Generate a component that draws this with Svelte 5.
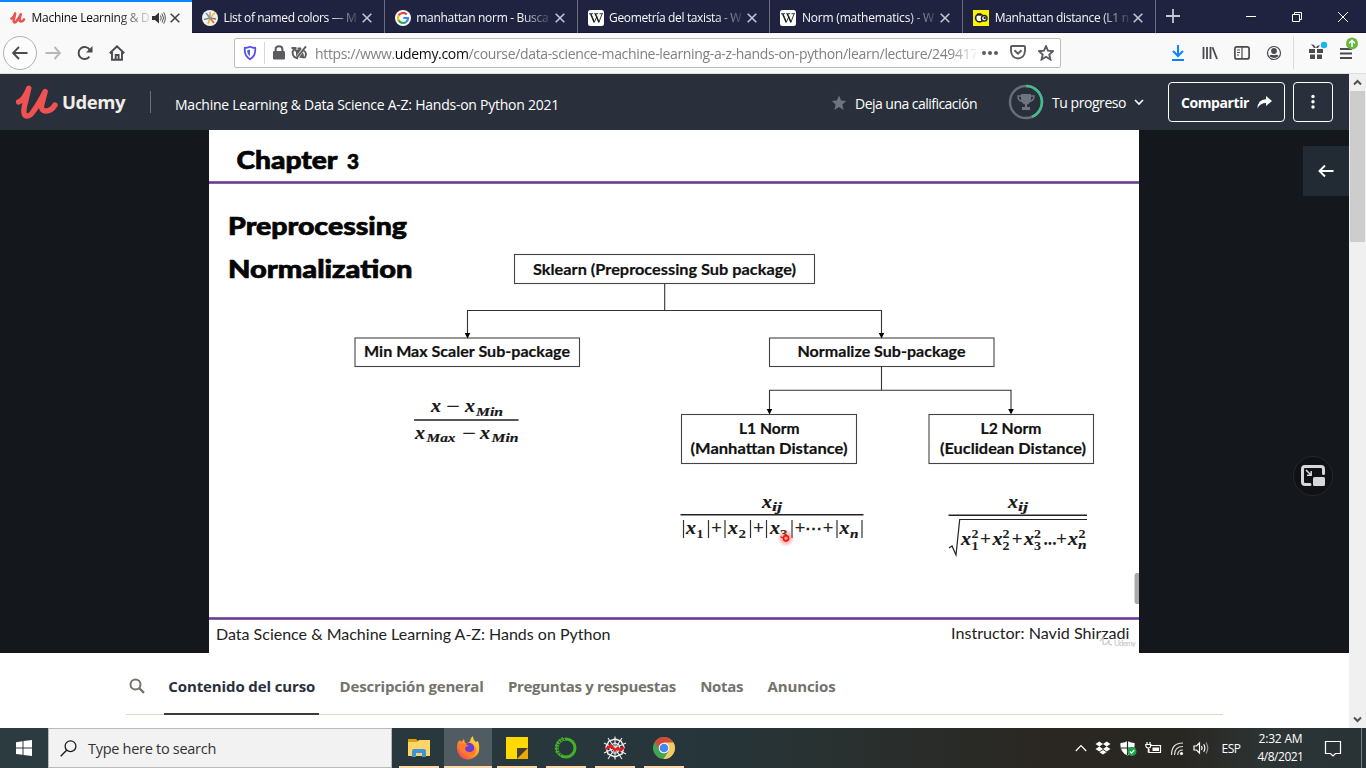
<script>
  const tabs = [
    { title: 'Machine Learning & D', width: 118, icon: 'udemy', active: true },
    { title: 'List of named colors — M', width: 133, icon: 'colors' },
    { title: 'manhattan norm - Busca', width: 132, icon: 'google' },
    { title: 'Geometría del taxista - W', width: 132, icon: 'wiki' },
    { title: 'Norm (mathematics) - W', width: 132, icon: 'wiki' },
    { title: 'Manhattan distance (L1 n', width: 134, icon: 'manhattan' }
  ];

  const sections = [
    { label: 'Contenido del curso', width: 147, active: true },
    { label: 'Descripción general', width: 144 },
    { label: 'Preguntas y respuestas', width: 168 },
    { label: 'Notas', width: 43 },
    { label: 'Anuncios', width: 68 }
  ];

  const boxes = [
    { x: 514.5, y: 254.5, w: 300, h: 29 },
    { x: 355, y: 338, w: 224.5, h: 28.5 },
    { x: 769.5, y: 338, w: 224.5, h: 28.5 },
    { x: 681.5, y: 414.5, w: 175, h: 49 },
    { x: 929, y: 414.5, w: 164.5, h: 49 }
  ];

  const labels = [
    { t: 'Sklearn (Preprocessing Sub package)', x: 533, y: 275, w: 263 },
    { t: 'Min Max Scaler Sub-package', x: 364, y: 357.3, w: 206 },
    { t: 'Normalize Sub-package', x: 797.5, y: 357.3, w: 168 },
    { t: 'L1 Norm', x: 739, y: 434, w: 60.5 },
    { t: '(Manhattan Distance)', x: 690.5, y: 454.2, w: 157 },
    { t: 'L2 Norm', x: 980.5, y: 434, w: 61 },
    { t: '(Euclidean Distance)', x: 940, y: 454.2, w: 146 }
  ];

  // Formula glyph runs: text, x, baseline, width, size class
  const formulas = [
    ['x', 431, 412, 10, 'v'], ['−', 446, 412, 14, 'o'], ['x', 465, 412, 10, 'v'], ['Min', 476, 415.5, 27, 's'],
    ['x', 415, 438.5, 10, 'v'], ['Max', 426.5, 442, 29, 's'], ['−', 462, 438.5, 14, 'o'], ['x', 480, 438.5, 10, 'v'], ['Min', 491.5, 442, 27, 's'],
    ['x', 762, 508, 10, 'v'], ['ij', 772, 511, 10, 's'],
    ['x', 686, 533.5, 10, 'v'], ['1', 696.5, 537.5, 7, 'n'], ['+', 711, 533.5, 11, 'o'],
    ['x', 728, 533.5, 10, 'v'], ['2', 738.5, 537.5, 7.5, 'n'], ['+', 753, 533.5, 11, 'o'],
    ['x', 770, 533.5, 10, 'v'], ['3', 780, 537.5, 7.5, 'n'], ['+', 794.5, 533.5, 11, 'o'],
    ['⋯', 805, 533.5, 17, 'o'], ['+', 822.5, 533.5, 11, 'o'], ['x', 839.5, 533.5, 10, 'v'], ['n', 850, 537.5, 8.5, 's'],
    ['x', 1008, 508, 10, 'v'], ['ij', 1018, 511, 10, 's'],
    ['x', 961, 545, 10, 'v'], ['2', 971.5, 538, 7, 'n'], ['1', 971.5, 549.5, 7, 'n'], ['+', 980, 545, 11, 'o'],
    ['x', 992.5, 545, 10, 'v'], ['2', 1002.5, 538, 7, 'n'], ['2', 1002.5, 549.5, 7, 'n'], ['+', 1011.5, 545, 11, 'o'],
    ['x', 1024, 545, 10, 'v'], ['2', 1034, 538, 7, 'n'], ['3', 1034, 549.5, 7, 'n'], ['...', 1043.5, 545, 13, 'o'],
    ['+', 1056, 545, 11, 'o'], ['x', 1068, 545, 10, 'v'], ['2', 1078.5, 538, 7, 'n'], ['n', 1078, 549, 8.5, 's']
  ];
  const bars = [683.5, 708.5, 725, 750.5, 766.5, 792, 837, 862];
  const apps = ['explorer', 'firefox', 'notes', 'anaconda', 'spyder', 'chrome'];

  // Tracks the text so that it takes the given width
  function fit(node, width) {
    const natural = node.getBoundingClientRect().width;
    node.style.letterSpacing = `${(width - natural) / node.textContent.length}px`;
  }
</script>

{#snippet favicon(kind)}
  <svg width="16" height="16" viewBox="0 0 16 16">
    {#if kind === 'udemy'}
      <path d="M1.4 8.6C3.200 8 4.600 5.500 5.200 3.400L3.800 9.800C3 13.200 5.400 13 6.800 10.800C8.600 8.400 9.800 6.200 10.700 4.200L9.600 9.400C9.200 12.200 12 12.200 14 9.400" fill="none" stroke="#ea5252" stroke-width="2.500" stroke-linecap="round" stroke-linejoin="round" />
    {:else if kind === 'colors'}
      <circle cx="8" cy="8" r="8" fill="#f4f1e8" />
      <g stroke-width="1.7" fill="none">
        <path d="M8 8L4 3" stroke="#5e9ad0" /><path d="M8 8L13 2.5" stroke="#efbd48" /><path d="M8 8L14 9" stroke="#91785a" />
        <path d="M8 8L12 13" stroke="#e36e35" /><path d="M8 8L6 14" stroke="#e4bb39" /><path d="M8 8L2 9.5" stroke="#6e90a5" /><path d="M8 8L8 2" stroke="#c2ac88" />
      </g>
      <circle cx="8" cy="8" r="1.5" fill="#8593a4" />
    {:else if kind === 'google'}
      <circle cx="8" cy="8" r="8" fill="#fff" />
      <g fill="none" stroke-width="2.2">
        <path d="M3.6 5.6A5 5 0 0 1 11.7 4.6" stroke="#ea4335" /><path d="M3.6 5.5A5 5 0 0 0 3.6 10.4" stroke="#fbbc05" />
        <path d="M3.6 10.3A5 5 0 0 0 11.3 11.8" stroke="#34a853" /><path d="M11.2 11.8A5 5 0 0 0 13 8H8.2" stroke="#4285f4" />
      </g>
    {:else if kind === 'wiki'}
      <rect width="16" height="16" rx="2.5" fill="#fff" />
      <path d="M1 3.7H5M6.1 3.7H10M11.5 3.7H15M2.8 4L6.2 12.3L9 6.500M7.4 4L10.9 12.3L14 4" fill="none" stroke="#222" stroke-width=".9" />
      <path d="M2.8 4L6.2 12.3M7.4 4L10.9 12.3" stroke="#222" stroke-width="1.4" />
    {:else}
      <rect width="16" height="16" fill="#fff200" />
      <circle cx="6.5" cy="8" r="3.9" fill="#fff" stroke="#222" stroke-width="1.6" /><circle cx="11.2" cy="8.3" r="2.8" fill="#fff" stroke="#222" stroke-width="1.4" />
      <circle cx="11.700" cy="8" r="1.200" fill="#222" /><path d="M4 4.500L8 4.800" stroke="#222" stroke-width="2" />
    {/if}
  </svg>
{/snippet}

{#snippet app(kind)}
  <svg width="24" height="24" viewBox="0 0 24 24">
    {#if kind === 'explorer'}
      <path d="M1 3H9L11 5V8H1z" fill="#e1a100" /><path d="M1 6H10L12 4H23V20H1z" fill="#ffd567" />
      <path d="M5 21V15Q5 13 7 13H17Q19 13 19 15V21H15V17H9V21z" fill="#3d94d8" />
    {:else if kind === 'firefox'}
      <path d="M2 6L4 4L5 6L8 3L9 7Q13 7 14 5Q14 2 17 0Q17 4 20 6L22 5Q26 18 17 22Q10 26 4 20Q-1 14 2 6z" fill="url(#fox)" />
      <circle cx="13" cy="12" r="5.3" fill="#6e3bd1" /><path d="M3 8Q8 6 13 10Q10 10 9 12Q9 16 14 16Q18 16 19 10Q22 19 13 20Q3 19 3 8z" fill="#ff7a29" />
    {:else if kind === 'notes'}
      <path d="M1 1H23V12L12 23H1z" fill="#ffd900" /><path d="M12 12H23L12 23z" fill="#433f36" /><path d="M23 12V23H12z" fill="#eca900" />
    {:else if kind === 'anaconda'}
      <circle cx="12" cy="12" r="9" fill="none" stroke="#43b02a" stroke-width="3" /><path d="M11 3A9 9 0 0 0 7 19" stroke="#26363b" stroke-width="1.5" stroke-dasharray="1.2 1.6" fill="none" />
      <path d="M9 2A10.500 10.500 0 0 0 3.500 18" stroke="#43b02a" stroke-width="1.8" stroke-dasharray="2 1.2" fill="none" />
    {:else if kind === 'spyder'}
      <g fill="none" stroke="#eee" stroke-width="1.1"><path d="M12 .500V23.500M1 7L23 18M1 17L23 7M5 2L19 23M19 2L5 23" /><path d="M12 3L18 5L21 11L19 18L12 21L5 18L3 11L6 5z" stroke-width="1.5" /><path d="M12 7L16 9L17 13L14 17H10L7 13L8 9z" /></g>
      <path d="M3 13L8 9.500L12 14L15 12L17 14.500L21 11.500" stroke="#e51b23" stroke-width="2.500" fill="none" />
    {:else}
      <circle cx="12" cy="12" r="11" fill="#43a455" /><path d="M12 12L2.5 6.5A11 11 0 0 1 21.5 6.5H12z" fill="#d9483b" /><path d="M21.5 6.5A11 11 0 0 1 11.5 23L17 14.5L12 6.5z" fill="#f4cb62" />
      <path d="M2.5 6.5L8 15L12 12L10 7z" fill="#d9483b" opacity=".6" /><circle cx="12" cy="12" r="5.3" fill="#fff" /><circle cx="12" cy="12" r="4.3" fill="#4586f4" />
    {/if}
    <defs><linearGradient id="fox" x1="1" y1="0" x2="0" y2="1"><stop offset="0" stop-color="#ffef48" /><stop offset=".5" stop-color="#ff9a26" /><stop offset="1" stop-color="#f22b68" /></linearGradient></defs>
  </svg>
{/snippet}

<div class="screen">
  <div class="tabbar">
    {#each tabs as tab}
      <div class="tab" class:active={tab.active}>
        {@render favicon(tab.icon)}
        <div class="title"><span use:fit={tab.width}>{tab.title}</span></div>
        {#if tab.active}
          <svg class="sound" width="16" height="14" viewBox="0 0 16 14"><path d="M1 5H4L8 1.5V12.5L4 9H1z" fill="#333" /><path d="M9.5 4.5Q11 7 9.5 9.5M11 2.5Q14 7 11 11.5M12.7 1.3Q16 7 12.7 12.7" fill="none" stroke="#555" /></svg>
        {/if}
        <svg class="close" width="10" height="10" viewBox="0 0 10 10"><path d="M.7.7L9.3 9.3M9.3.7L.7 9.3" /></svg>
      </div>
    {/each}
    <svg class="plus" width="14" height="14" viewBox="0 0 14 14"><path d="M7 0V14M0 7H14" stroke="#c6c7d0" stroke-width="1.8" /></svg>
    <div class="winbtns">
      <svg width="12" height="12" viewBox="0 0 12 12"><path d="M1 5.5H11" /></svg>
      <svg width="12" height="12" viewBox="0 0 12 12"><path d="M1.5 3.5H8.5V10.5H1.5zM3.5 3V1.5H10.5V8.5H9" /></svg>
      <svg width="12" height="12" viewBox="0 0 12 12"><path d="M1 1L11 11M11 1L1 11" /></svg>
    </div>
  </div>

  <div class="toolbar">
    <div class="back"><svg width="16" height="16" viewBox="0 0 16 16"><path d="M15.5 8H1.5M7 2L1 8L7 14" /></svg></div>
    <svg class="nav dim" width="16" height="16" viewBox="0 0 16 16"><path d="M.5 8H14.5M9.5 2L15 8L9.5 14" /></svg>
    <svg class="nav reload" width="16" height="16" viewBox="0 0 16 16"><path d="M12.4 11.7A6 6 0 1 1 12.8 5" /><path d="M15.5 1V7.5H9z" /></svg>
    <svg class="nav" width="16" height="16" viewBox="0 0 16 16"><path d="M.8 8.2L8 1.3L15.2 8.2M3 7V14.8H13V7M6.7 14.5V10H9.6V14.5" /></svg>
    <div class="url">
      <svg width="14" height="16" viewBox="0 0 14 16"><path d="M7 1.8Q9.5 3 12.2 3Q13 11 7 14.2Q1 11 1.8 3Q4.5 3 7 1.8z" fill="none" stroke="#5a4cea" stroke-width="1.8" /><path d="M7 4.5V11.3Q4 9 4.2 5.2z" fill="#3b68ee" /></svg>
      <i></i>
      <svg width="12" height="15" viewBox="0 0 12 15"><rect y="6" width="12" height="8.5" rx="1.2" fill="#5b5b60" /><path d="M2.6 7V4.3Q2.6 1.2 6 1.2T9.4 4.3V7" fill="none" stroke="#5b5b60" stroke-width="2" /></svg>
      <svg class="blocked" width="17" height="16" viewBox="0 0 17 16"><path d="M3 4Q0 8 3.200 12L7 13.500M.500 3H4.500V6.500M12.500 5.500Q16.800 8 13.500 13M6.500 3.500H10M5.500 13L15 1.300" fill="none" stroke="#5b5b60" stroke-width="1.900" /><path d="M5 5L11 3.500L5 11.500z" fill="#5b5b60" /><path d="M12 7L8 12.500L13.500 13.500z" fill="#5b5b60" /></svg>
      <div class="address"><span use:fit={663}>https://www.<b>udemy.com</b>/course/data-science-machine-learning-a-z-hands-on-python/learn/lecture/249417</span></div>
      <svg class="dots" width="16" height="4" viewBox="0 0 16 4"><circle cx="2" cy="2" r="2" /><circle cx="8" cy="2" r="2" /><circle cx="14" cy="2" r="2" /></svg>
      <svg class="pocket" width="16" height="15" viewBox="0 0 16 15"><path d="M1 2Q1 1 2 1H14Q15 1 15 2V6Q14.5 12.8 8 13.5Q1.5 12.8 1 6zM4.5 5.3L8 8.7L11.5 5.3" /></svg>
      <svg class="bookmark" width="16" height="16" viewBox="0 0 16 16"><path d="M8 1.2L10 5.7L15 6.2L11.3 9.5L12.4 14.5L8 11.8L3.6 14.5L4.7 9.5L1 6.2L6 5.7z" /></svg>
    </div>
    <div class="tools">
      <svg width="16" height="18" viewBox="0 0 16 18"><path d="M8 1V12M3 7L8 12L13 7" fill="none" stroke="#0a84ff" stroke-width="2" /><path d="M2 16H14" stroke="#0a84ff" stroke-width="2" /></svg>
      <svg width="16" height="16" viewBox="0 0 16 16"><path d="M1.5 2V14M5 2V14M8.5 2V14M10.5 2.3L15 14" stroke="#4a4a4f" stroke-width="1.8" fill="none" /></svg>
      <svg width="16" height="14" viewBox="0 0 16 14"><rect x=".9" y=".9" width="14.2" height="12" rx="2" fill="none" stroke="#4a4a4f" stroke-width="1.7" /><path d="M8 1V13M3 4H6M3 6.5H6M3 9H5" stroke="#4a4a4f" stroke-width="1.2" /></svg>
      <svg width="16" height="16" viewBox="0 0 16 16"><circle cx="8" cy="8" r="6.5" fill="none" stroke="#4a4a4f" stroke-width="1.2" /><circle cx="8" cy="6" r="2.9" fill="#4a4a4f" /><path d="M3.3 11Q5 9 8 10.2Q11 9 12.7 11Q8 15 3.3 11z" fill="#4a4a4f" /></svg>
      <i></i>
      <svg class="gift" width="20" height="20" viewBox="0 0 20 20"><path d="M1 8H7V12H1zM9 8H15V12H9zM2 13.5H7V18H2zM9 13.5H14V18H9zM3 3L6 7L10 7L12 4L9 5L8 7L6 4z" fill="#4a4a4f" /><circle cx="16" cy="4" r="3.2" fill="#16b5f4" /></svg>
      <svg class="menu" width="18" height="24" viewBox="0 0 18 24"><path d="M0 12H12M0 16.5H12M0 21H12" stroke="#4a4a4f" stroke-width="1.8" /><circle cx="12" cy="6.5" r="6" fill="#67b83e" /><path d="M12 10V3.5M9 6.2L12 3.2L15 6.2" stroke="#fff" stroke-width="1.5" fill="none" /></svg>
    </div>
  </div>

  <div class="viewport">
    <div class="page">
      <header>
        <svg width="42" height="36" viewBox="0 0 42 36"><path d="M2.5 18Q8 16 12.8 4.2L8.5 22C5.5 36 14 33 17.5 27C23 20 27 11 29.2 7.5L25.5 21.5C24.5 29 34 29 39 21" fill="none" stroke="#f05252" stroke-width="5.4" stroke-linecap="round" stroke-linejoin="round" /></svg>
        <span class="brand" use:fit={63}>Udemy</span>
        <i class="divider"></i>
        <span class="course" use:fit={384}>Machine Learning &amp; Data Science A-Z: Hands-on Python 2021</span>
        <svg class="rate" width="16" height="16" viewBox="0 0 16 16"><path d="M8 .5L10.1 5.4L15.2 5.9L11.4 9.4L12.6 15L8 12.1L3.4 15L4.6 9.4L.8 5.9L5.9 5.4z" fill="#6f747e" /></svg>
        <span class="small" use:fit={122}>Deja una calificación</span>
        <svg class="trophy" width="36" height="36" viewBox="0 0 36 36"><circle cx="18" cy="18" r="16" fill="none" stroke="#686f7a" stroke-width="2.4" /><path d="M18 2A16 16 0 0 1 24 32.8" fill="none" stroke="#42bd8d" stroke-width="2.6" /><path d="M13 10H23V15Q22 20 19 20.5V23H22V26H14V23H17V20.5Q14 20 13 15z" fill="#6f747e" /><path d="M13 12H10Q10 17 15 17.5M23 12H26Q26 17 21 17.5" fill="none" stroke="#6f747e" stroke-width="1.5" /></svg>
        <span class="small progress" use:fit={74}>Tu progreso</span>
        <svg class="chev" width="10" height="7" viewBox="0 0 10 7"><path d="M1 1L5 5L9 1" fill="none" stroke="#fff" stroke-width="1.6" /></svg>
        <button class="share"><span use:fit={68}>Compartir</span><svg width="15" height="13" viewBox="0 0 15 13"><path d="M9 0L15 5L9 10V7Q3 7 .5 12.5Q.5 3.5 9 3.2z" fill="#fff" /></svg></button>
        <button class="more"><svg width="4" height="16" viewBox="0 0 4 16"><circle cx="2" cy="2.5" r="1.7" /><circle cx="2" cy="7.8" r="1.7" /><circle cx="2" cy="13" r="1.7" /></svg></button>
      </header>

      <main>
        <svg class="slide" width="930" height="523" viewBox="209 130 930 523">
          <rect x="209" y="130" width="930" height="523" fill="#fff" />
          <g class="head">
            <text x="236.500" y="169" textLength="101" lengthAdjust="spacingAndGlyphs">Chapter</text><text x="347" y="169" font-size="20" textLength="12" lengthAdjust="spacingAndGlyphs">3</text>
            <text x="228" y="235" textLength="179" lengthAdjust="spacingAndGlyphs">Preprocessing</text>
            <text x="228" y="277.5" textLength="184.500" lengthAdjust="spacingAndGlyphs">Normalization</text>
          </g>
          <path d="M209 182.5H1139M209 618.5H1139" stroke="#a785c0" stroke-width="3" /><path d="M209 182.5H1139M209 618.5H1139" stroke="#6c3e91" stroke-width="1.8" />
          {#each boxes as b}<rect class="box" x={b.x} y={b.y} width={b.w} height={b.h} />{/each}
          <path class="wire" d="M664.7 284V310.5M467.5 334V310.5H881.5V334M881.5 366.5V390.3M769.5 410V390.3H1011V410" />
          <path d="M464.7 333H470.3L467.5 338.5zM878.7 333H884.3L881.5 338.5zM766.7 409H772.3L769.5 414.5zM1008.2 409H1013.8L1011 414.5z" />
          {#each labels as l}<text class="label" x={l.x} y={l.y} textLength={l.w} lengthAdjust="spacingAndGlyphs">{l.t}</text>{/each}
          <path d="M414 420H518.5M680.5 514.7H863.5M948.5 515.3H1087" stroke="#222" stroke-width="1.4" />
          <path d="M949 548L952 546L956 555L959.7 519.5H1087" fill="none" stroke="#222" stroke-width="1.2" />
          {#each bars as x}<path d={`M${x} 520V538`} stroke="#333" stroke-width="1.2" />{/each}
          {#each formulas as [t, x, y, w, kind]}<text class={kind} {x} {y} textLength={w} lengthAdjust="spacingAndGlyphs">{t}</text>{/each}
          <defs><radialGradient id="glow"><stop offset="0" stop-color="#ff2a1a" stop-opacity=".75" /><stop offset=".4" stop-color="#ff4a3a" stop-opacity=".45" /><stop offset="1" stop-color="#ff5a4a" stop-opacity="0" /></radialGradient></defs>
          <circle cx="786" cy="538" r="9" fill="url(#glow)" /><circle cx="786" cy="538.3" r="2.6" fill="#ff9a90" stroke="#f50f0f" stroke-width="1.6" />
          <path d="M1139 573H1137Q1134.5 573 1134.5 576V601Q1134.5 604 1137 604H1139z" fill="#a9a9a9" />
          <text class="foot" x="216" y="640" textLength="394.500" lengthAdjust="spacingAndGlyphs">Data Science &amp; Machine Learning A-Z: Hands on Python</text>
          <text class="foot" x="951" y="639" textLength="178.500" lengthAdjust="spacingAndGlyphs">Instructor: Navid Shirzadi</text>
          <path d="M1100 641L1103 638V644Q1106 646 1109 640V644L1112 645" fill="none" stroke="#cfcfcf" stroke-width="1.4" /><text class="mark" x="1114" y="646" textLength="22">Udemy</text>
        </svg>
        <div class="expand"><svg width="16" height="14" viewBox="0 0 16 14"><path d="M15.500 7H1.500M7 1.500L1.500 7L7 12.500" fill="none" stroke="#fff" stroke-width="1.900" /></svg></div>
        <div class="pip"><svg width="26" height="24" viewBox="0 0 26 24"><path d="M10 20.500H5Q2.500 20.500 2.500 18V5Q2.500 2.500 5 2.500H21Q23.500 2.500 23.500 5V9.500" fill="none" stroke="#d7d7db" stroke-width="3" stroke-linecap="round" /><rect x="13" y="13" width="12" height="9" rx="1.500" fill="#d7d7db" /><path d="M6 6L11 11M11.200 7V11.300H7" fill="none" stroke="#d7d7db" stroke-width="1.500" /></svg></div>
      </main>

      <nav class="sections">
        <svg width="16" height="16" viewBox="0 0 16 16"><circle cx="6.500" cy="6.500" r="5" fill="none" stroke="#73726c" stroke-width="2" /><path d="M10 10L15 14.800" stroke="#73726c" stroke-width="2.400" /></svg>
        {#each sections as s}<div class="section" class:active={s.active}><span use:fit={s.width}>{s.label}</span></div>{/each}
      </nav>
    </div>
    <div class="scrollbar">
      <div class="arrow"><svg width="9" height="7" viewBox="0 0 9 7"><path d="M1 5.500L4.500 2L8 5.500" /></svg></div>
      <div class="thumb"></div>
      <div class="arrow end"><svg width="9" height="7" viewBox="0 0 9 7"><path d="M1 1.500L4.500 5L8 1.500" /></svg></div>
    </div>
  </div>

  <div class="taskbar">
    <div class="start"><svg width="16" height="16" viewBox="0 0 16 16"><path d="M0 2.300L6.500 1.300V7.500H0zM7.500 1.100L16 0V7.500H7.500zM0 8.500H6.500V14.800L0 13.900zM7.500 8.500H16V16L7.500 15z" fill="#fff" /></svg></div>
    <div class="search"><svg width="17" height="17" viewBox="0 0 17 17"><circle cx="10.500" cy="6.200" r="5.400" fill="none" stroke="#1d1d1d" stroke-width="1.300" /><path d="M6.600 10.200L.7 16.200" stroke="#1d1d1d" stroke-width="1.400" /></svg><span use:fit={128}>Type here to search</span></div>
    <div class="apps">
      {#each apps as name}<div class="app" class:current={name === 'firefox'}>{@render app(name)}</div>{/each}
    </div>
    <div class="tray">
      <svg width="12" height="8" viewBox="0 0 12 8"><path d="M.8 7L6 1.500L11.200 7" /></svg>
      <svg width="16" height="16" viewBox="0 0 16 16"><path class="solid" d="M4.300 1.500L8 4L4.300 6.500L.500 4zM11.700 1.500L15.500 4L11.700 6.500L8 4zM4.300 6.500L8 9L4.300 11.500L.500 9zM11.700 6.500L15.500 9L11.700 11.500L8 9zM4.500 12.300L8 10L11.500 12.300L8 14.600z" /></svg>
      <svg width="17" height="17" viewBox="0 0 17 17"><path class="solid" d="M7.500 1Q11 3 14.500 3Q15.500 12 7.500 15.500Q-.5 12 .500 3Q4 3 7.500 1z" /><path class="gap" d="M7.500 1V15M1 8H14" /><circle cx="12" cy="11.500" r="4.500" fill="#17a34a" /><path d="M9.800 11.500L11.500 13.200L14.300 10" /></svg>
      <svg width="17" height="14" viewBox="0 0 17 14"><path d="M5 4.500H15.500V11.500H4V8M2 1V3M5 1V3M.800 3.500H5.800V5Q5.500 7 3.300 7T.800 5zM3.300 7V11H4" /><path class="solid" d="M7.500 6.500H14V10H7.500z" /></svg>
      <svg width="15" height="15" viewBox="0 0 15 15"><path d="M1.500 14Q1.500 2 13 2M4.500 14Q4.500 5.500 13 5.500M7.700 14Q7.700 9 13 9" opacity=".85" /><circle cx="11.500" cy="12.500" r="1.600" fill="#fff" /></svg>
      <svg width="17" height="14" viewBox="0 0 17 14"><path d="M1 5H3.500L6.500 2V12L3.500 9H1zM8.500 5Q9.700 7 8.500 9M10.700 3.200Q13 7 10.700 10.800" /><path d="M13 1.500Q16.500 7 13 12.500" opacity=".5" /></svg>
    </div>
    <div class="lang"><span use:fit={19}>ESP</span></div>
    <div class="clock"><span use:fit={44}>2:32 AM</span><span use:fit={46}>4/8/2021</span></div>
    <svg class="notif" width="18" height="17" viewBox="0 0 18 17"><path d="M1.500 1.500H16.500V13.500H11.500L9 16L6.500 13.500H1.500z" fill="none" stroke="#fff" stroke-width="1.200" /></svg>
    <i class="desk"></i>
  </div>
</div>

<style>
  :global(body) { margin: 0; overflow: hidden; }
  .screen { width: 1366px; height: 768px; display: flex; flex-direction: column; overflow: hidden; font-family: "Open Sans", "Noto Sans", sans-serif; }
  .screen * { box-sizing: border-box; }
  svg { flex: none; display: block; }
  span { white-space: nowrap; display: inline-block; }

  .tabbar { height: 33px; flex: none; display: flex; align-items: center; background: #202340; box-shadow: inset 0 -1px #15172c; }
  .tab { width: 192.800px; height: 33px; flex: none; padding: 2px 12px 0 10px; display: flex; align-items: center; color: #f9f9fa; border-right: 1px solid #696b80; font-size: 12px; }
  .tab.active { width: 192px; background: #f9f9fa; color: #0c0c0d; border: 0; box-shadow: inset 0 2px #0a84ff; }
  .title { width: 134px; margin-left: 5.500px; overflow: hidden; mask-image: linear-gradient(90deg, #000 105px, transparent 138px); }
  .active .title { width: 117px; mask-image: linear-gradient(90deg, #000 85px, transparent 122px); }
  .sound { margin-left: 2px; }
  .close { margin-left: auto; }
  .close path { stroke: #c3c4ce; stroke-width: 1.600; }
  .active .close path { stroke: #444; }
  .plus { margin-left: 10px; margin-top: -1px; }
  .winbtns { margin: 0 17px 0 auto; display: flex; gap: 34px; }
  .winbtns path { fill: none; stroke: #fff; }

  .toolbar { height: 41px; flex: none; display: flex; align-items: center; padding: 0 0 1px 3px; background: #f9f9fa; border-bottom: 1px solid #dfdfe1; }
  .back { width: 34px; height: 34px; flex: none; border: 1px solid #b1b1b3; border-radius: 50%; background: #fcfcfc; display: grid; place-items: center; margin-right: 8px; }
  .back path, .nav path { fill: none; stroke: #4a4a4f; stroke-width: 1.900; }
  .nav { margin-right: 16px; }
  .nav.dim path { stroke: #b8b8bb; }
  .reload path:last-child { fill: #4a4a4f; stroke: none; }
  .url { width: 827px; height: 30px; flex: none; margin-left: 93px; padding: 0 6px 0 8px; display: flex; align-items: center; border: 1px solid #bcbcbd; border-radius: 2px; background: #fff; }
  .url i { width: 1px; height: 22px; margin: 0 8px 0 7px; background: #d7d7db; }
  .blocked { margin-left: 6px; }
  .address { width: 661px; margin: 1px 0 0 7px; overflow: hidden; font-size: 14px; color: #808085; mask-image: linear-gradient(90deg, #000 635px, transparent 664px); }
  .address b { font-weight: 400; color: #0c0c0d; }
  .dots { margin-left: 6px; fill: #5b5b60; }
  .pocket { margin-left: 12px; }
  .bookmark { margin-left: 12px; }
  .pocket path, .bookmark path { fill: none; stroke: #5b5b60; stroke-width: 1.900; }
  .tools { margin-left: 109px; display: flex; align-items: center; gap: 16px; }
  .tools i { width: 1px; height: 33px; flex: none; margin: 0 -2px 0 -5px; background: #dcdcde; }
  .gift { margin-right: -4px; margin-top: -4px; }
  .menu { margin-top: -7px; }

  .viewport { height: 654px; flex: none; display: flex; }
  .page { width: 1349px; display: flex; flex-direction: column; background: #fff; }
  header { height: 56px; flex: none; display: flex; align-items: center; background: #29303b; color: #fff; padding-left: 16px; }
  .brand { font-weight: 700; font-size: 18.500px; color: #f1ede7; margin: 0 1px 1px 4px; line-height: 24px; }
  .divider { width: 1px; height: 22px; margin: 0 24px; background: #6a6f7a; }
  .course { font-size: 14px; margin-top: 5px; }
  .rate { margin-left: 272px; margin-top: 1px; }
  .small { font-size: 14px; margin-left: 8px; margin-top: 3px; }
  .trophy { margin-left: 31px; }
  .progress { margin-top: 0; }
  .chev { margin: 1px 0 0 8px; }
  button { height: 40px; padding: 0; background: none; border: 1px solid #fff; border-radius: 4px; color: #fff; display: flex; align-items: center; justify-content: center; font: 700 14px "Open Sans", sans-serif; }
  .share { width: 117px; margin-left: 24px; gap: 8px; }
  .more { width: 40px; margin-left: 8px; }
  .more circle { fill: #fff; }

  main { height: 523px; flex: none; display: flex; background: #14171c; padding-left: 209px; }
  .slide { font-family: Lato, sans-serif; }
  .head { font-weight: 900; font-size: 25px; fill: #050505; stroke: #050505; stroke-width: .7; }
  .box { fill: #fff; stroke: #444; stroke-width: 1.100; }
  .wire { fill: none; stroke: #333; stroke-width: 1.100; }
  .label { font-weight: 700; font-size: 16px; fill: #111; stroke: #111; stroke-width: .2; }
  .v, .s { font-family: "Liberation Serif", serif; font-weight: 700; font-style: italic; fill: #171717; }
  .v { font-size: 19.500px; stroke: #171717; stroke-width: .2; }
  .s { font-size: 13.500px; stroke: #171717; stroke-width: .2; }
  .n { font-family: "Liberation Serif", serif; font-weight: 700; font-size: 12.500px; fill: #222; }
  .o { font-family: "Liberation Serif", serif; font-weight: 700; font-size: 18px; fill: #222; }
  .foot { font-size: 16px; fill: #222; }
  .mark { font-size: 8px; font-weight: 700; fill: #cfcfcf; }
  .expand { width: 46px; height: 50px; flex: none; margin: 16px 0 0 164px; background: #222a33; display: grid; place-items: center; }
  .pip { width: 40px; height: 40px; flex: none; margin: 326px 0 0 -56px; border: 1px solid #25282c; border-radius: 50%; background: #101114; display: grid; place-items: center; }

  .sections { width: 1097px; height: 62px; margin-left: 126px; border-bottom: 1px solid #d8dac4; display: flex; align-items: center; padding-left: 3px; }
  .sections svg { margin: 4px 19px 0 0; }
  .section { height: 62px; margin-right: 16px; padding: 6px 4px 0 4.300px; display: flex; align-items: center; border-bottom: 2px solid transparent; font-weight: 700; font-size: 15px; color: #73726c; }
  .section.active { color: #29303b; border-color: #3c3b37; }

  .scrollbar { width: 17px; background: #f0f0f0; display: flex; flex-direction: column; }
  .arrow { height: 17px; display: grid; place-items: center; }
  .arrow.end { margin-top: auto; }
  .arrow path { fill: none; stroke: #505050; stroke-width: 2; }
  .thumb { height: 151px; margin: 0 1px; background: #cdcdcd; }

  .taskbar { height: 40px; flex: none; display: flex; align-items: center; background: linear-gradient(90deg, #2b3b40 0, #26363b 690px, #29302f 850px, #2a2722 1040px, #292722 1180px, #2d3434 1270px, #283337 1366px); color: #fff; }
  .start { width: 48px; display: grid; place-items: center; }
  .search { width: 344px; height: 40px; padding-left: 11px; display: flex; align-items: center; gap: 11px; background: #f2f2f2; border: 1px solid #b9b9b9; color: #333; font-size: 14.500px; }
  .apps { display: flex; padding-left: 2px; }
  .app { width: 49px; height: 40px; display: flex; justify-content: center; align-items: center; background: linear-gradient(#fbd7a9, #fbd7a9) center bottom / 40px 2px no-repeat; }
  .app.current { background: linear-gradient(#fbd7a9, #fbd7a9) center bottom / 48px 2px no-repeat, linear-gradient(#515c62, #515c62) center / 48px 40px no-repeat; }
  .tray { margin-left: 387px; display: flex; align-items: center; gap: 8.300px; }
  .tray path { fill: none; stroke: #fff; stroke-width: 1.200; }
  .tray .solid { fill: #fff; stroke: none; }
  .tray .gap { stroke: #292622; }
  .lang { width: 20px; margin-left: 11px; font-size: 12px; }
  .clock { width: 48px; margin-left: 15px; display: flex; flex-direction: column; align-items: center; font-size: 12px; line-height: 18px; }
  .notif { margin-left: 20px; }
  .desk { width: 1px; height: 40px; margin-left: auto; margin-right: 4px; background: #737b7d; }
</style>
